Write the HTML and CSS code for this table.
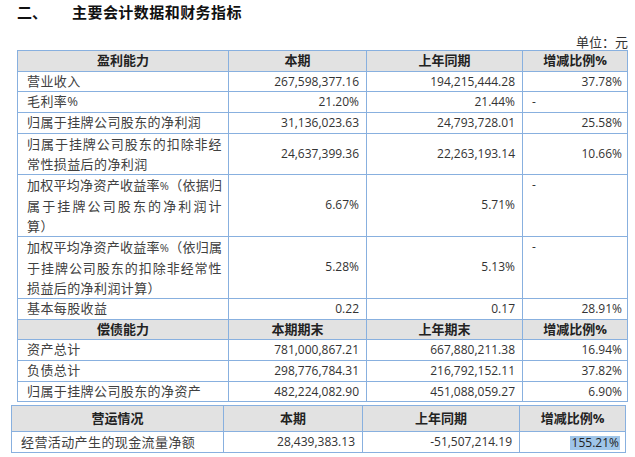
FILE: index.html
```html
<!DOCTYPE html>
<html lang="zh-CN">
<head>
<meta charset="utf-8">
<title>主要会计数据和财务指标</title>
<link rel="stylesheet" href="styles.css">
</head>
<body>
<h2 class="title"><span class="num">二、</span>主要会计数据和财务指标</h2>
<div class="unit">单位：元</div>
<table class="t t1">
  <colgroup><col class="w1"><col class="w2"><col class="w3"><col></colgroup>
  <tr class="hd"><th>盈利能力</th><th>本期</th><th>上年同期</th><th>增减比例%</th></tr>
  <tr><td class="lb">营业收入</td><td class="n">267,598,377.16</td><td class="n">194,215,444.28</td><td class="p">37.78%</td></tr>
  <tr><td class="lb">毛利率%</td><td class="n">21.20%</td><td class="n">21.44%</td><td class="dash">-</td></tr>
  <tr><td class="lb">归属于挂牌公司股东的净利润</td><td class="n">31,136,023.63</td><td class="n">24,793,728.01</td><td class="p">25.58%</td></tr>
  <tr><td class="lb"><span class="ln jf">归属于挂牌公司股东的扣除非经</span><span class="ln">常性损益后的净利润</span></td><td class="n">24,637,399.36</td><td class="n">22,263,193.14</td><td class="p">10.66%</td></tr>
  <tr><td class="lb"><span class="ln jf tight">加权平均净资产收益率<span class="pc">%</span>（依据归</span><span class="ln jf">属于挂牌公司股东的净利润计</span><span class="ln">算）</span></td><td class="n">6.67%</td><td class="n">5.71%</td><td class="dash">-</td></tr>
  <tr><td class="lb"><span class="ln jf tight">加权平均净资产收益率<span class="pc">%</span>（依归属</span><span class="ln jf">于挂牌公司股东的扣除非经常性</span><span class="ln">损益后的净利润计算）</span></td><td class="n">5.28%</td><td class="n">5.13%</td><td class="dash">-</td></tr>
  <tr><td class="lb">基本每股收益</td><td class="n">0.22</td><td class="n">0.17</td><td class="p">28.91%</td></tr>
  <tr class="hd"><th>偿债能力</th><th>本期期末</th><th>上年期末</th><th>增减比例%</th></tr>
  <tr><td class="lb">资产总计</td><td class="n">781,000,867.21</td><td class="n">667,880,211.38</td><td class="p">16.94%</td></tr>
  <tr><td class="lb">负债总计</td><td class="n">298,776,784.31</td><td class="n">216,792,152.11</td><td class="p">37.82%</td></tr>
  <tr><td class="lb">归属于挂牌公司股东的净资产</td><td class="n">482,224,082.90</td><td class="n">451,088,059.27</td><td class="p">6.90%</td></tr>
</table>
<table class="t t2">
  <colgroup><col class="v1"><col class="v2"><col class="v3"><col></colgroup>
  <tr class="hd"><th>营运情况</th><th>本期</th><th>上年同期</th><th>增减比例%</th></tr>
  <tr><td class="lb">经营活动产生的现金流量净额</td><td class="n">28,439,383.13</td><td class="n">-51,507,214.19</td><td class="p"><span class="sel">155.21%</span></td></tr>
</table>
</body>
</html>
```

FILE: styles.css
```css
* { box-sizing: border-box; }
html, body { margin: 0; padding: 0; background: #fff; }
body {
  width: 635px;
  height: 457px;
  overflow: hidden;
  font-family: "Open Sans", "Noto Sans CJK SC", sans-serif;
  color: #333;
}
.title {
  margin: 0;
  height: 24px;
  line-height: 24px;
  padding-left: 17px;
  font-family: "Noto Sans CJK SC", sans-serif;
  font-size: 15px;
  font-weight: 700;
  letter-spacing: 0.45px;
  color: #111;
}
.title .num { display: inline-block; width: 55px; letter-spacing: 0; }
.unit {
  height: 26px;
  padding: 8px 7px 0 0;
  line-height: 20px;
  text-align: right;
  font-family: "Noto Sans CJK SC", sans-serif;
  font-size: 13px;
  color: #333;
}
.t { border-collapse: collapse; table-layout: fixed; }
.t td, .t th {
  border: 1px solid #88b0df;
  padding: 0;
  line-height: 19.7px;
  font-size: 12px;
}
.t1 { margin-left: 17px; width: 611px; }
.t1 .w1 { width: 211px; }
.t1 .w2 { width: 138px; }
.t1 .w3 { width: 156px; }
.t2 { margin: 3px 0 0 11px; width: 615px; }
.t2 .v1 { width: 212px; }
.t2 .v2 { width: 139px; }
.t2 .v3 { width: 157px; }
.t2 .hd th { line-height: 25px; }
.t2 td { line-height: 20px; }
.hd th {
  background: #e2e2e2;
  font-family: "Open Sans", "Noto Sans CJK SC", sans-serif;
  font-weight: 700;
  font-size: 13px;
  color: #222;
  text-align: center;
}
.lb {
  padding: 0 6px 0 9px !important;
  font-size: 13px !important;
  letter-spacing: 0.4px;
  color: #404040;
  vertical-align: top;
}
.ln { display: block; line-height: 20px; white-space: nowrap; }
.jf { text-align: justify; text-align-last: justify; white-space: normal; }
.tight { letter-spacing: 0; }
.pc { font-size: 11px; }
.n { text-align: right; padding-right: 7px !important; vertical-align: middle; color: #333; }
.p { text-align: right; padding-right: 5px !important; vertical-align: middle; color: #333; }
.dash { text-align: left; padding-left: 9px !important; vertical-align: top; color: #333; }
.sel {
  display: inline-block;
  background: #9fc5e8;
  line-height: 14px;
  padding: 0 1px 0 2px;
  vertical-align: middle;
  color: #222;
}
```
